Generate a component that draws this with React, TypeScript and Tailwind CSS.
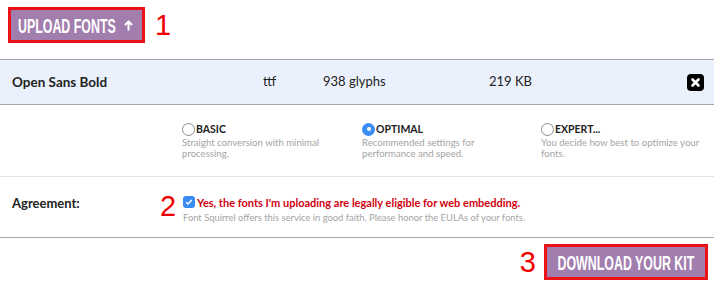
import * as React from 'react';

const RED = 'text-[#f10000]';

const Radio = ({ checked }: { checked?: boolean }) =>
  checked ? (
    <span className="w-[13px] h-[13px] rounded-full bg-[#3b8bf5] flex items-center justify-center shrink-0">
      <span className="w-[4px] h-[4px] rounded-full bg-white" />
    </span>
  ) : (
    <span className="w-[13px] h-[13px] rounded-full border border-[#8a8a8a] bg-white shrink-0" />
  );

const options = [
  { label: 'BASIC', lines: ['Straight conversion with minimal', 'processing.'], w: 'w-[180px]' },
  { label: 'OPTIMAL', lines: ['Recommended settings for', 'performance and speed.'], w: 'w-[179px]', checked: true },
  { label: 'EXPERT...', lines: ['You decide how best to optimize your', 'fonts.'], w: 'w-[170px]' },
];

export default function App() {
  return (
    <div className="w-[714px] h-[287px] bg-white overflow-hidden text-[#222]" style={{ fontFamily: 'Lato, "Open Sans", sans-serif' }}>
      {/* Upload */}
      <div className="flex items-center pt-[7px] pl-[8px] h-[43px]">
        <div className="w-[137px] h-[36px] border-[3px] border-[#ea1119] bg-[#a27eae] flex items-center">
          <span
            className="inline-block text-[21px] leading-none font-bold text-white scale-x-[0.59] origin-left ml-[7px] whitespace-nowrap"
            style={{ fontFamily: '"Liberation Sans", sans-serif' }}
          >
            UPLOAD FONTS
          </span>
          <svg className="ml-[-60px] mt-[1px]" width="9" height="11" viewBox="0 0 9 11">
            <path d="M4.5 10.5V2M1 5l3.5-3.5L8 5" stroke="#fff" strokeWidth="2" fill="none" />
          </svg>
        </div>
        <span className={`ml-[10px] text-[29px] leading-none ${RED}`} style={{ fontFamily: '"Liberation Sans", sans-serif' }}>
          1
        </span>
      </div>

      {/* File row */}
      <div className="mt-[16px] h-[46px] border-y border-[#a5a5a5] bg-[#ebf1fc] flex items-center text-[13px]">
        <span className="w-[263px] shrink-0 pl-[12px] font-bold text-[13.5px]">Open Sans Bold</span>
        <span className="w-[60px] shrink-0">ttf</span>
        <span className="w-[166px] shrink-0">938 glyphs</span>
        <span className="flex-1">219 KB</span>
        <svg className="mr-[10px]" width="17" height="17" viewBox="0 0 17 17">
          <rect x="0" y="0" width="17" height="17" rx="4" fill="#000" />
          <path d="M5.5 5.5l6 6M11.5 5.5l-6 6" stroke="#fff" strokeWidth="2.6" strokeLinecap="round" />
        </svg>
      </div>

      {/* Options */}
      <div className="h-[72px] border-b border-[#e3e3e3] flex pl-[182px] pt-[17px]">
        {options.map((o) => (
          <div key={o.label} className={`${o.w} flex flex-col`}>
            <div className="flex items-center h-[14px]">
              <Radio checked={o.checked} />
              <span className="font-bold text-[10.5px] ml-[1px] leading-none">{o.label}</span>
            </div>
            <div className="mt-[2px] text-[9.6px] leading-[10.5px] text-[#a4a4a4]">
              {o.lines.map((l) => (
                <div key={l}>{l}</div>
              ))}
            </div>
          </div>
        ))}
      </div>

      {/* Agreement */}
      <div className="h-[61px] border-b border-[#a8a8a8] flex pl-[12px] pt-[15px]">
        <span className="w-[148px] font-bold text-[13px] leading-none mt-[5px]">Agreement:</span>
        <span className={`w-[23px] text-[29px] leading-none ${RED}`} style={{ fontFamily: '"Liberation Sans", sans-serif' }}>
          2
        </span>
        <div className="flex flex-col">
          <div className="flex items-center mt-[4px]">
            <span className="w-[12px] h-[12px] rounded-[3px] bg-[#3b8bf5] flex items-center justify-center">
              <svg width="8" height="8" viewBox="0 0 8 8">
                <path d="M1.2 4.2l1.8 1.8 3.8-4" stroke="#fff" strokeWidth="1.5" fill="none" />
              </svg>
            </span>
            <span className="ml-[2px] font-bold text-[11px] leading-none text-[#d10010]">
              Yes, the fonts I'm uploading are legally eligible for web embedding.
            </span>
          </div>
          <span className="mt-[5px] text-[9.4px] leading-none text-[#a4a4a4]">
            Font Squirrel offers this service in good faith. Please honor the EULAs of your fonts.
          </span>
        </div>
      </div>

      {/* Download */}
      <div className="flex justify-end items-center pr-[6px] pt-[6px]">
        <span className={`mr-[8px] text-[29px] leading-none ${RED}`} style={{ fontFamily: '"Liberation Sans", sans-serif' }}>
          3
        </span>
        <div className="w-[164px] h-[36px] border-[3px] border-[#ea1119] bg-[#a27eae] flex items-center justify-center">
          <span
            className="inline-block text-[21px] leading-none font-bold text-white scale-x-[0.59] whitespace-nowrap"
            style={{ fontFamily: '"Liberation Sans", sans-serif' }}
          >
            DOWNLOAD YOUR KIT
          </span>
        </div>
      </div>
    </div>
  );
}
